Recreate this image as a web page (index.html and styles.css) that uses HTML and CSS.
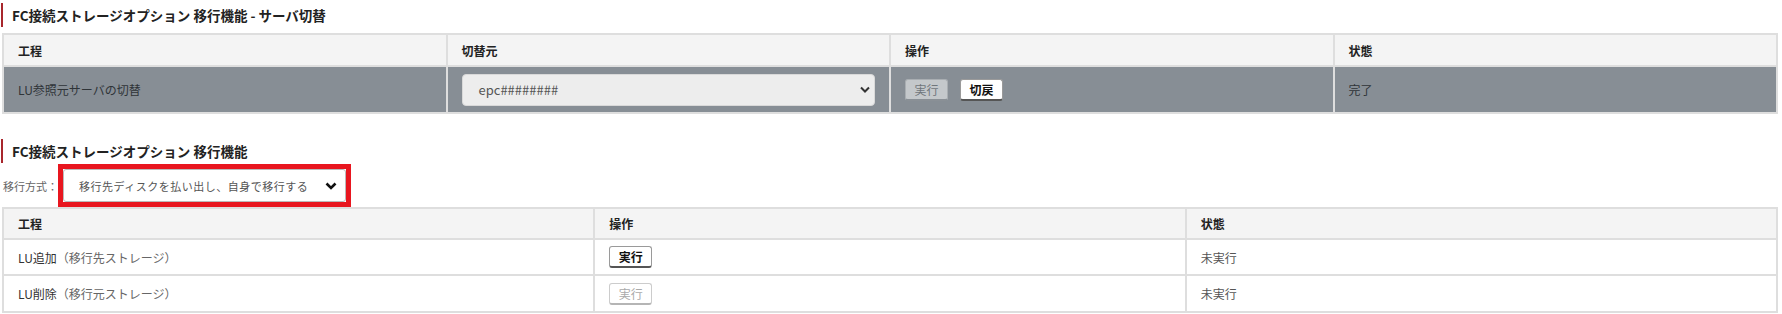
FILE: index.html
```html
<!DOCTYPE html>
<html>
<head>
  <title>FC接続ストレージオプション 移行機能</title>
  <link rel="stylesheet" href="styles.css">
</head>
<body>
  <div class="page">
    <!-- Server switch -->
    <h3 class="section-title">FC接続ストレージオプション 移行機能 - サーバ切替</h3>
    <table class="grid grid-4">
      <tr>
        <th>工程</th>
        <th>切替元</th>
        <th>操作</th>
        <th>状態</th>
      </tr>
      <tr class="done">
        <td>LU参照元サーバの切替</td>
        <td class="cell-select">
          <div class="fake-select gray">
            <span>epc########</span>
            <svg class="chevron" width="10" height="7" viewBox="0 0 10 7"><path d="M1 1.5 L5 5.5 L9 1.5" fill="none" stroke="#333" stroke-width="2"/></svg>
          </div>
        </td>
        <td>
          <div class="btn-row">
            <button class="btn btn-off-dark">実行</button>
            <button class="btn">切戻</button>
          </div>
        </td>
        <td>完了</td>
      </tr>
    </table>

    <!-- Migration -->
    <h3 class="section-title second">FC接続ストレージオプション 移行機能</h3>
    <div class="method">
      <span class="method-label">移行方式：</span>
      <div class="highlight">
        <div class="fake-select white">
          <span>移行先ディスクを払い出し、自身で移行する</span>
          <svg class="chevron" width="12" height="8" viewBox="0 0 12 8"><path d="M1.5 1.5 L6 6 L10.5 1.5" fill="none" stroke="#111" stroke-width="2.6"/></svg>
        </div>
      </div>
    </div>
    <table class="grid grid-3">
      <tr>
        <th>工程</th>
        <th>操作</th>
        <th>状態</th>
      </tr>
      <tr class="row-a">
        <td>LU追加<span class="sub">（移行先ストレージ）</span></td>
        <td><button class="btn">実行</button></td>
        <td class="muted">未実行</td>
      </tr>
      <tr class="row-b">
        <td>LU削除<span class="sub">（移行元ストレージ）</span></td>
        <td><button class="btn btn-off" disabled>実行</button></td>
        <td class="muted">未実行</td>
      </tr>
    </table>
  </div>
</body>
</html>
```

FILE: styles.css
```css
/* Basic reset */
* {
  box-sizing: border-box;
  margin: 0;
  padding: 0;
}

body {
  font-family: "Noto Sans CJK JP", "Noto Sans", sans-serif;
  font-size: 12px;
  color: #333333;
  background-color: #ffffff;
}

.page {
  padding: 3px 4px 0 2px;
}

/* Section heading with red bar */
.section-title {
  height: 24px;
  line-height: 24px;
  margin-left: -1px;
  margin-bottom: 6px;
  padding-left: 9px;
  border-left: 2px solid #a8262c;
  font-size: 13.5px;
  font-weight: bold;
  color: #222222;
}

.section-title.second {
  margin-top: 25px;
  margin-bottom: 1px;
}

/* Tables */
.grid {
  width: 100%;
  border-collapse: collapse;
  table-layout: fixed;
  border: 2px solid #dedede;
}

.grid th,
.grid td {
  border: 2px solid #dedede;
  padding: 0 14px;
  text-align: left;
  vertical-align: middle;
}

.grid th {
  height: 32px;
  background-color: #f4f4f4;
  font-weight: bold;
  color: #222222;
}

.grid-3 th {
  height: 31px;
}

.done td {
  height: 47px;
  background-color: #878e95; /* finished row */
  color: #2f3438;
}

.row-a td {
  height: 36px;
}

.row-b td {
  height: 37px;
}

.cell-select {
  padding: 0 14px 0 14px !important;
}

.sub {
  color: #666666;
}

.muted {
  color: #555555;
}

/* Select look-alike */
.fake-select {
  display: flex;
  align-items: center;
  justify-content: space-between;
  border-radius: 4px;
  white-space: nowrap;
}

.fake-select.gray {
  height: 32px;
  padding: 0 4px 0 16px;
  background-color: #ededed;
  border: 1px solid #d9d9d9;
  font-size: 13px;
  color: #555555;
}

.fake-select.white {
  width: 283px;
  height: 33px;
  padding: 0 8px 0 15px;
  background-color: #ffffff;
  border: 1px solid #bbbbbb;
  border-radius: 3px;
  font-size: 11px;
  letter-spacing: 0.5px;
  color: #555555;
}

/* Migration method line */
.method {
  display: flex;
  align-items: center;
  height: 43px;
}

.method-label {
  flex-shrink: 0;
  white-space: nowrap;
  padding-left: 1px;
  font-size: 11px;
  color: #666666;
}

.highlight {
  flex-shrink: 0;
  border: 5px solid #e8161f;
}

/* Buttons */
.btn-row {
  display: flex;
  gap: 12px;
}

.btn {
  width: 43px;
  height: 22px;
  font-family: "Noto Sans CJK JP", sans-serif;
  font-size: 12px;
  font-weight: bold;
  color: #111111;
  background-color: #ffffff;
  border: 1px solid #9a9a9a;
  border-bottom: 2px solid #555555;
  border-radius: 3px;
  cursor: pointer;
}

.btn-off-dark {
  background-color: #c4c8cb;
  border-color: #a9aeb2;
  border-bottom-color: #8a9096;
  color: #70767b;
  font-weight: normal;
}

.btn-off {
  color: #aaaaaa;
  border-color: #cccccc;
  border-bottom-color: #b5b5b5;
  font-weight: normal;
  cursor: default;
}
```
